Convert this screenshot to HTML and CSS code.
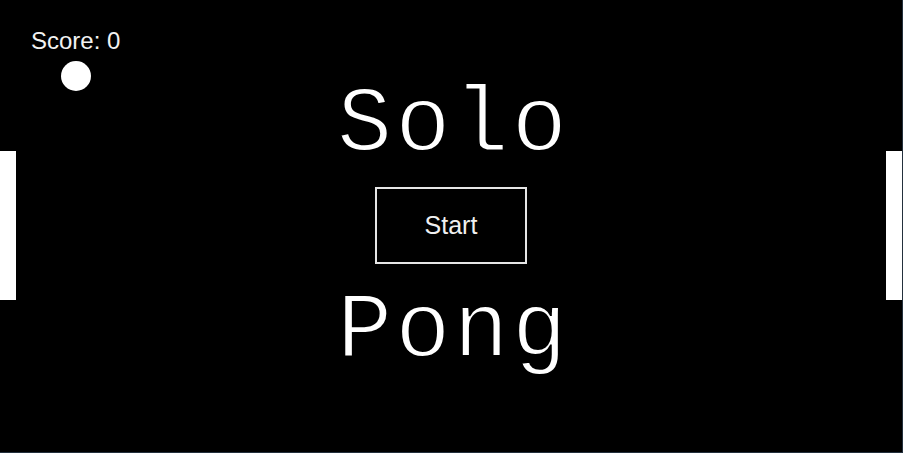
FILE: index.html
```html
<!DOCTYPE html>
<html>
<head>
<meta charset="utf-8">
<link rel="stylesheet" href="styles.css">
</head>
<body>
<div class="field">
  <div class="score">Score: 0</div>
  <div class="ball"></div>
  <div class="paddle paddle-left"></div>
  <div class="paddle paddle-right"></div>
  <div class="menu">
    <div class="title">Solo</div>
    <button class="start">Start</button>
    <div class="title title-bottom">Pong</div>
  </div>
</div>
</body>
</html>
```
FILE: styles.css
```css
html, body {
  margin: 0;
  padding: 0;
  background: #23303d;
}
.field {
  position: relative;
  width: 902px;
  height: 452px;
  background: #000;
  overflow: hidden;
}
.score {
  position: absolute;
  left: 31px;
  top: 27px;
  font-family: "Liberation Sans", Arial, sans-serif;
  font-size: 24px;
  line-height: 28px;
  color: #f2f2f2;
}
.ball {
  position: absolute;
  left: 61px;
  top: 61px;
  width: 30px;
  height: 30px;
  border-radius: 50%;
  background: #fff;
}
.paddle {
  position: absolute;
  top: 151px;
  width: 16px;
  height: 149px;
  background: #fff;
}
.paddle-left { left: 0; }
.paddle-right { right: 0; }
.menu {
  display: flex;
  flex-direction: column;
  align-items: center;
  padding-top: 80px;
}
.title {
  font-family: "Liberation Mono", "Courier New", monospace;
  font-size: 92px;
  line-height: 92px;
  letter-spacing: 3px;
  margin-left: 5px;
  color: #fff;
  -webkit-text-stroke: 2px #000;
}
.start {
  margin-top: 15px;
  width: 152px;
  height: 77px;
  box-sizing: border-box;
  border: 2px solid #e6e6e6;
  background: #000;
  color: #f0f0f0;
  font-family: "Liberation Sans", Arial, sans-serif;
  font-size: 25px;
  padding: 0;
}
.title-bottom {
  margin-top: 22px;
}
```
